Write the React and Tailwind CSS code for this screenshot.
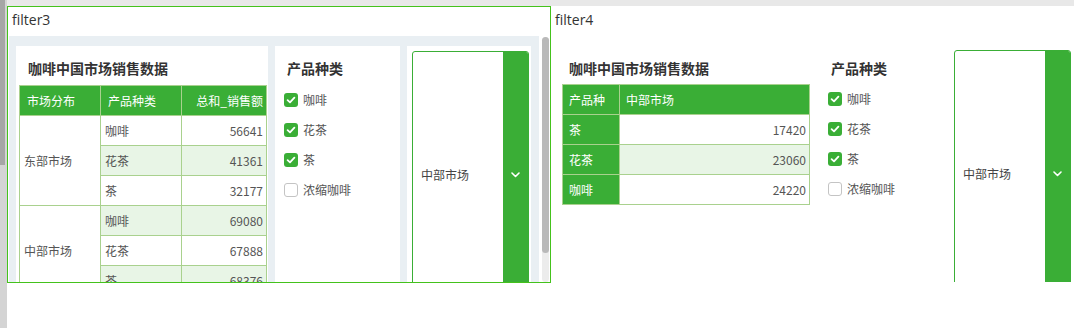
import React from "react";

function Check({ checked }) {
  if (checked) {
    return (
      <span className="flex h-[14px] w-[14px] shrink-0 items-center justify-center rounded-[3px] bg-[#3aae36]">
        <svg width="10" height="10" viewBox="0 0 10 10">
          <path d="M1.6 5.2 L4 7.4 L8.4 2.6" fill="none" stroke="white" strokeWidth="1.8" strokeLinecap="round" strokeLinejoin="round" />
        </svg>
      </span>
    );
  }
  return <span className="h-[14px] w-[14px] shrink-0 rounded-[3px] border border-[#c4c4c4] bg-white" />;
}

function Checks({ titleMl, boxMl, gapTop }) {
  const items = [
    ["咖啡", true],
    ["花茶", true],
    ["茶", true],
    ["浓缩咖啡", false],
  ];
  return (
    <div className="flex flex-col">
      <div className={`h-[16px] text-[14px] font-bold leading-[16px] text-[#333] ${titleMl}`}>产品种类</div>
      <div className={`flex flex-col ${gapTop}`}>
        {items.map(([label, c]) => (
          <div key={label} className={`flex h-[30px] items-center gap-[5px] ${boxMl}`}>
            <Check checked={c} />
            <span className="text-[12px] leading-[14px] text-[#555]">{label}</span>
          </div>
        ))}
      </div>
    </div>
  );
}

function Select() {
  return (
    <div className="flex h-[248px] w-[117px] shrink-0 overflow-hidden rounded-t-[3px] border border-[#3aae36] bg-white">
      <div className="flex flex-1 items-center pl-[8px] text-[12px] text-[#444]">中部市场</div>
      <div className="flex w-[25px] items-center justify-center bg-[#3aae36]">
        <svg width="9" height="6" viewBox="0 0 9 6">
          <path d="M1 1 L4.5 4.5 L8 1" fill="none" stroke="white" strokeWidth="1.6" strokeLinecap="round" strokeLinejoin="round" />
        </svg>
      </div>
    </div>
  );
}

const hd = "flex items-center bg-[#3aae36] text-[12px] text-white";
const cw = "flex items-center bg-white text-[12px] text-[#555]";
const cg = "flex items-center bg-[#e8f5e6] text-[12px] text-[#555]";

function Table3() {
  const rows = [
    ["咖啡", "56641"],
    ["花茶", "41361"],
    ["茶", "32177"],
    ["咖啡", "69080"],
    ["花茶", "67888"],
    ["茶", "68376"],
  ];
  return (
    <div className="ml-[3px] mt-[9px] grid w-[248px] grid-cols-[80px_80px_84px] auto-rows-[29px] gap-px border border-[#a9d18e] bg-[#a9d18e]">
      <div className={`${hd} pl-[7px]`}>市场分布</div>
      <div className={`${hd} pl-[7px]`}>产品种类</div>
      <div className={`${hd} justify-end pr-[3px]`}>总和_销售额</div>
      {rows.map(([p, v], i) => {
        const bg = i % 2 === 1 ? cg : cw;
        return (
          <React.Fragment key={i}>
            {i === 0 && <div className={`${cw} row-span-3 pl-[4px]`}>东部市场</div>}
            {i === 3 && <div className={`${cw} row-span-3 pl-[4px]`}>中部市场</div>}
            <div className={`${bg} pl-[4px]`}>{p}</div>
            <div className={`${bg} justify-end pr-[3px]`}>{v}</div>
          </React.Fragment>
        );
      })}
    </div>
  );
}

function Table4() {
  const rows = [
    ["茶", "17420"],
    ["花茶", "23060"],
    ["咖啡", "24220"],
  ];
  return (
    <div className="mt-[8px] grid w-[248px] grid-cols-[56px_189px] auto-rows-[29px] gap-px border border-[#a9d18e] bg-[#a9d18e]">
      <div className={`${hd} pl-[6px]`}>产品种</div>
      <div className={`${hd} pl-[6px]`}>中部市场</div>
      {rows.map(([p, v], i) => (
        <React.Fragment key={i}>
          <div className={`${hd} pl-[6px]`}>{p}</div>
          <div className={`${i === 1 ? cg : cw} justify-end pr-[3px]`}>{v}</div>
        </React.Fragment>
      ))}
    </div>
  );
}

export default function App() {
  return (
    <div className="flex h-[328px] w-[1074px] overflow-hidden bg-white font-['Noto_Sans_CJK_SC',sans-serif]">
      <div className="w-[7px] shrink-0 bg-[#d4d4d4]">
        <div className="h-[165px] w-[5px] bg-[#a6a6a6]" />
      </div>
      <div className="flex min-w-0 flex-1 flex-col">
        <div className="h-[6px] shrink-0 bg-[#e8e8e8]" />
        <div className="flex">
          {/* filter3 */}
          <div className="flex h-[277px] w-[544px] shrink-0 flex-col overflow-hidden border border-[#44c21c] bg-white">
            <div className="h-[29px] shrink-0 pl-[4px] pt-[3px] font-['Open_Sans',sans-serif] text-[14px] leading-[20px] text-[#333]">
              filter3
            </div>
            <div className="flex min-h-0 flex-1">
              <div className="ml-[1px] flex min-w-0 flex-1 gap-[7px] overflow-hidden bg-[#e9eff3] px-[7px] pt-[10px]">
                <div className="w-[252px] shrink-0 bg-white pt-[14px]">
                  <div className="ml-[12px] h-[16px] text-[14px] font-bold leading-[16px] text-[#333]">咖啡中国市场销售数据</div>
                  <Table3 />
                </div>
                <div className="w-[125px] shrink-0 bg-white pt-[14px]">
                  <Checks titleMl="ml-[12px]" boxMl="ml-[9px]" gapTop="mt-[9px]" />
                </div>
                <div className="w-[124px] shrink-0 bg-white pl-[5px] pt-[5px]">
                  <Select />
                </div>
              </div>
              <div className="ml-[3px] mr-[1px] mt-[1px] w-[7px] shrink-0 rounded-[4px] bg-[#ececec]">
                <div className="h-[216px] rounded-[4px] bg-[#b9b9b9]" />
              </div>
            </div>
          </div>
          {/* filter4 */}
          <div className="flex h-[276px] min-w-0 flex-1 flex-col overflow-hidden bg-white">
            <div className="h-[30px] shrink-0 pl-[4px] pt-[4px] font-['Open_Sans',sans-serif] text-[14px] leading-[20px] text-[#333]">
              filter4
            </div>
            <div className="flex pl-[11px] pt-[10px]">
              <div className="w-[248px] shrink-0 pt-[14px]">
                <div className="ml-[7px] h-[16px] text-[14px] font-bold leading-[16px] text-[#333]">咖啡中国市场销售数据</div>
                <Table4 />
              </div>
              <div className="ml-[18px] w-[126px] shrink-0 pt-[14px]">
                <Checks titleMl="ml-[3px]" boxMl="ml-0" gapTop="mt-[8px]" />
              </div>
              <div className="pt-[4px]">
                <Select />
              </div>
            </div>
          </div>
        </div>
      </div>
    </div>
  );
}
